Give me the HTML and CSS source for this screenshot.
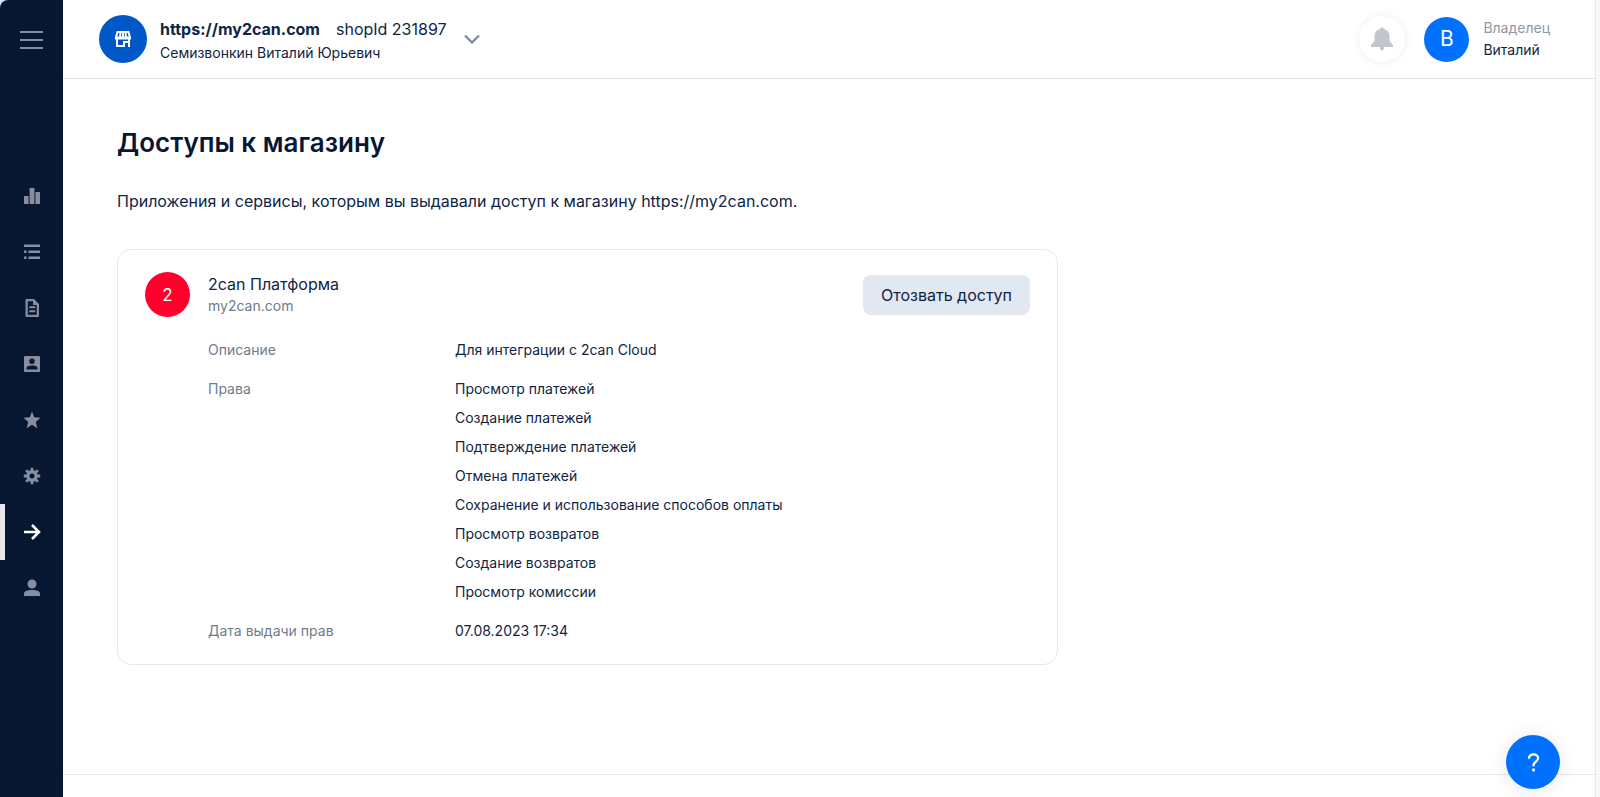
FILE: index.html
```html
<!DOCTYPE html>
<html lang="ru">
<head>
<meta charset="utf-8">
<title>Доступы к магазину</title>
<meta name="viewport" content="width=device-width, initial-scale=1">
<link rel="stylesheet" href="styles.css">
</head>
<body>
<div class="app">
  <aside class="sidebar">
    <button class="menu-toggle" type="button" aria-label="Меню">
      <svg width="24" height="20" viewBox="0 0 24 20"><path d="M0 2h23M0 10h23M0 18h23" stroke="currentColor" stroke-width="2" fill="none"/></svg>
    </button>
    <nav class="nav" aria-label="Разделы">
      <a class="nav-item" href="#stats" aria-label="Статистика"><svg class="nav-icon" viewBox="0 0 18 18"><path d="M1 9h4.600v8H1zM6.600 1h4.800v16H6.600zM12.400 5H17v12h-4.600z"/></svg></a>
      <a class="nav-item" href="#payments" aria-label="Платежи"><svg class="nav-icon" viewBox="0 0 18 18"><path d="M1 1.500h16v2.400H1zM1 7.500h2.500v2.600H1zM5.500 7.500H17v2.600H5.500zM1 13.500h2.500v2.500H1zM5.500 13.500H17V16H5.500z"/></svg></a>
      <a class="nav-item" href="#docs" aria-label="Документы"><svg class="nav-icon" viewBox="0 0 18 18"><path fill-rule="evenodd" d="M3.500 0H11l5 5v12q0 1-1 1H3.500q-1 0-1-1V1q0-1 1-1zM4.800 2.300v13.400h8.900V6H10V2.300z"/><path d="M6.300 7.200h5.900v2H6.300zM6.300 11.200h5.900v2H6.300z"/></svg></a>
      <a class="nav-item" href="#contacts" aria-label="Контакты"><svg class="nav-icon" viewBox="0 0 18 18"><path fill-rule="evenodd" d="M2 1h14q1 0 1 1v14q0 1-1 1H2q-1 0-1-1V2q0-1 1-1zM9 3.500a2.700 2.700 0 1 0 0 5.400a2.700 2.700 0 1 0 0-5.400zM3.500 14.500h11v-1.500c0-1.800-3.500-2.500-5.500-2.500s-5.500.7-5.500 2.500z"/></svg></a>
      <a class="nav-item" href="#favorites" aria-label="Избранное"><svg class="nav-icon" viewBox="0 0 18 18"><path d="M9 .5l2.300 5.800 6.200.5-4.700 4.100 1.500 6.300L9 13.800l-5.300 3.400 1.500-6.300L.5 6.800l6.200-.5z"/></svg></a>
      <a class="nav-item" href="#settings" aria-label="Настройки"><svg class="nav-icon" viewBox="0 0 18 18"><g fill="none" stroke="currentColor"><circle cx="9" cy="9" r="4.200" stroke-width="3.400"/><path d="M9 .8v3M9 14.200v3M.8 9h3M14.200 9h3M3.200 3.200l2.100 2.100M12.700 12.700l2.100 2.100M3.200 14.800l2.100-2.100M12.700 5.300l2.100-2.100" stroke-width="2.800"/></g></svg></a>
      <a class="nav-item nav-item-active" href="#access" aria-label="Доступы" aria-current="page"><svg class="nav-icon" viewBox="0 0 18 18"><path d="M1 9h15M9 2l7 7-7 7" fill="none" stroke="currentColor" stroke-width="2.600"/></svg></a>
      <a class="nav-item" href="#profile" aria-label="Профиль"><svg class="nav-icon" viewBox="0 0 18 18"><circle cx="9" cy="5" r="4.500"/><path d="M1 17v-2.500C1 12 4.500 11 9 11s8 1 8 3.500V17z"/></svg></a>
    </nav>
  </aside>

  <div class="page">
    <header class="topbar">
      <button class="shop" type="button">
        <span class="shop-logo">
          <svg width="18" height="18" viewBox="0 0 18 18" fill="none" stroke="#fff" stroke-width="2"><path d="M3.500 2h11l1.500 5.500H2zM6.500 2L6 8M11.500 2l.5 6M9 2v6M3 9v7h7M15 9v8M1 8.500h16M10 17v-5h4"/></svg>
        </span>
        <span class="shop-text">
          <span class="shop-line"><b class="shop-url">https://my2can.com</b><span>shopId 231897</span></span>
          <span class="shop-owner">Семизвонкин Виталий Юрьевич</span>
        </span>
        <svg class="shop-chevron" width="18" height="10" viewBox="0 0 18 10"><path d="M2 1.500l7 7 7-7" fill="none" stroke="currentColor" stroke-width="2.200"/></svg>
      </button>
      <div class="account">
        <button class="bell" type="button" aria-label="Уведомления">
          <svg width="24" height="24" viewBox="0 0 24 24"><path d="M12 .5c1.200 0 1.700.7 1.800 1.500 3.600.8 5.700 3.500 5.700 7v5l3.500 4v2H1v-2l3.500-4V9c0-3.500 2.100-6.200 5.700-7C10.300 1.200 10.800.5 12 .5zM10 20h4v1c0 1.500-.8 2.500-2 2.500s-2-1-2-2.500z" fill="currentColor"/></svg>
        </button>
        <button class="user" type="button">
          <span class="avatar avatar-user">В</span>
          <span class="user-text"><span class="user-role">Владелец</span><span>Виталий</span></span>
        </button>
      </div>
    </header>

    <main class="content">
      <h1 class="title">Доступы к магазину</h1>
      <p class="lead">Приложения и сервисы, которым вы выдавали доступ к магазину https://my2can.com.</p>
      <section class="card">
        <span class="avatar avatar-app">2</span>
        <div class="card-body">
          <div class="card-head">
            <div class="app-text">
              <h2 class="app-name">2can Платформа</h2>
              <span class="app-site">my2can.com</span>
            </div>
            <button class="revoke" type="button">Отозвать доступ</button>
          </div>
          <dl class="details">
            <dt>Описание</dt>
            <dd>Для интеграции с 2can Cloud</dd>
            <dt>Права</dt>
            <dd>
              <ul class="rights">
                <li>Просмотр платежей</li>
                <li>Создание платежей</li>
                <li>Подтверждение платежей</li>
                <li>Отмена платежей</li>
                <li>Сохранение и использование способов оплаты</li>
                <li>Просмотр возвратов</li>
                <li>Создание возвратов</li>
                <li>Просмотр комиссии</li>
              </ul>
            </dd>
            <dt>Дата выдачи прав</dt>
            <dd>07.08.2023 17:34</dd>
          </dl>
        </div>
      </section>
    </main>
    <footer class="footer"></footer>
  </div>
</div>
<button class="help" type="button" aria-label="Помощь">
  <svg width="13" height="19" viewBox="0 0 14 20"><path d="M2 6c0-3 2-4.700 5-4.700s5 1.700 5 4.200c0 3.500-5 3.800-5 7.500v1" fill="none" stroke="#fff" stroke-width="2.400"/><circle cx="7" cy="18" r="1.700" fill="#fff"/></svg>
</button>
</body>
</html>
```
FILE: styles.css
```css
* {
  box-sizing: border-box;
}

body {
  margin: 0;
  background: #dce6ee;
  color: #0f2543;
  font-family: Inter, "Liberation Sans", sans-serif;
  font-size: 14px;
  line-height: 20px;
}

button {
  padding: 0;
  border: 0;
  background: none;
  color: inherit;
  font: inherit;
  text-align: left;
  cursor: pointer;
}

svg {
  display: block;
}

.app {
  display: flex;
  min-height: 100vh;
  background: #fff;
  border-right: 4px solid #f7f8f9;
  border-radius: 8px 0 0 0;
}

.sidebar {
  flex: none;
  width: 63px;
  background: #071631;
  color: #868da0;
  border-radius: 8px 0 0 0;
}

.menu-toggle {
  display: flex;
  align-items: center;
  justify-content: center;
  width: 100%;
  height: 80px;
}

.nav {
  display: flex;
  flex-direction: column;
  padding-top: 88px;
}

.nav-item {
  display: flex;
  align-items: center;
  justify-content: center;
  height: 56px;
  color: inherit;
}

.nav-item-active {
  color: #fff;
  background: linear-gradient(#e8e8ea, #e8e8ea) left / 5px 100% no-repeat;
}

.nav-icon {
  width: 18px;
  height: 18px;
  fill: currentColor;
}

.page {
  flex: 1;
  display: flex;
  flex-direction: column;
  border-right: 1px solid #e6e8ea;
}

.topbar {
  display: flex;
  align-items: center;
  justify-content: space-between;
  height: 79px;
  padding: 0 45px 0 36px;
  border-bottom: 1px solid #e2e4e7;
}

.shop {
  display: flex;
  align-items: center;
}

.shop-logo {
  display: flex;
  align-items: center;
  justify-content: center;
  width: 48px;
  height: 48px;
  border-radius: 50%;
  background: #0057c8;
}

.shop-text {
  display: flex;
  flex-direction: column;
  gap: 4px;
  margin: 0 16px 0 13px;
  padding-top: 4px;
}

.shop-line {
  display: flex;
  gap: 16px;
  font-size: 16px;
}

.shop-url {
  font-weight: 700;
}

.shop-chevron {
  color: #7b8798;
}

.account,
.user {
  display: flex;
  align-items: center;
}

.account {
  gap: 19px;
}

.bell {
  display: flex;
  align-items: center;
  justify-content: center;
  width: 46px;
  height: 46px;
  border-radius: 50%;
  background: #fff;
  box-shadow: 0 0 8px rgba(20, 30, 50, 0.08);
  color: #c1c6cd;
}

.user {
  gap: 14px;
}

.user-text {
  display: flex;
  flex-direction: column;
  gap: 2px;
}

.user-role {
  color: #8f98a5;
}

.avatar {
  display: flex;
  flex: none;
  align-items: center;
  justify-content: center;
  width: 45px;
  height: 45px;
  border-radius: 50%;
  color: #fff;
}

.avatar-user {
  background: #0070ff;
  font-size: 21px;
}

.avatar-app {
  background: #ff002d;
  font-size: 17px;
}

.content {
  flex: 1;
  padding: 46px 54px;
}

.title {
  margin: 0;
  color: #071634;
  font-size: 26px;
  font-weight: 600;
  line-height: 36px;
}

.lead {
  margin: 28px 0 36px;
  font-size: 16px;
  line-height: 24px;
}

.card {
  display: flex;
  gap: 18px;
  max-width: 941px;
  padding: 22px 27px 23px;
  border: 1px solid #e6e8ea;
  border-radius: 14px;
}

.card-body {
  flex: 1;
}

.card-head {
  display: flex;
  align-items: center;
  justify-content: space-between;
  min-height: 45px;
}

.app-text {
  display: flex;
  flex-direction: column;
  gap: 2px;
}

.app-name {
  margin: 0;
  font-size: 16px;
  font-weight: 400;
}

.app-site,
.details dt {
  color: #6f7b8c;
}

.revoke {
  padding: 10px 18px;
  border-radius: 8px;
  background: #e2e8f2;
  font-size: 16px;
}

.details {
  display: grid;
  grid-template-columns: 247px 1fr;
  row-gap: 19px;
  margin: 23px 0 0;
}

.details dd {
  margin: 0;
}

.rights {
  display: grid;
  gap: 9px;
  margin: 0;
  padding: 0;
  list-style: none;
}

.footer {
  height: 23px;
  border-top: 1px solid #e6e8ea;
}

.help {
  position: fixed;
  right: 40px;
  bottom: 8px;
  display: flex;
  align-items: center;
  justify-content: center;
  width: 54px;
  height: 54px;
  border-radius: 50%;
  background: #0070ff;
  box-shadow: 0 2px 20px rgba(20, 30, 50, 0.1);
}
```
